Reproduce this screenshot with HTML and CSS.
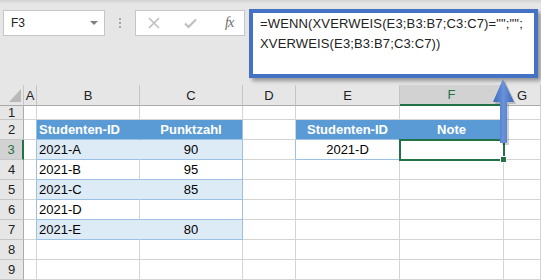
FILE: index.html
```html
<!DOCTYPE html>
<html lang="de">
<head>
    <meta charset="UTF-8">
    <title>XVERWEIS leer</title>
    <link rel="stylesheet" href="styles.css">
</head>
<body>
    <div class="toolbar">
        <div class="namebox"><span>F3</span><span class="caret"></span></div>
        <div class="grip"><i></i><i></i><i></i></div>
        <div class="fnbtns">
            <svg width="12" height="12" viewBox="0 0 12 12"><path d="M1 1 L11 11 M11 1 L1 11" stroke="#bfbfbf" stroke-width="1.6" fill="none"/></svg>
            <svg width="13" height="11" viewBox="0 0 13 11"><path d="M1 5.5 L4.5 9 L12 1.5" stroke="#bfbfbf" stroke-width="2.2" fill="none"/></svg>
            <span class="fx">fx</span>
        </div>
        <div class="formula">
            <div>=WENN(XVERWEIS(E3;B3:B7;C3:C7)="";"";</div>
            <div>XVERWEIS(E3;B3:B7;C3:C7))</div>
        </div>
    </div>

    <div class="sheet">
        <div class="hd corner"></div>
        <div class="hd">A</div>
        <div class="hd">B</div>
        <div class="hd">C</div>
        <div class="hd">D</div>
        <div class="hd">E</div>
        <div class="hd sel-col">F</div>
        <div class="hd">G</div>

        <div class="rh">1</div>
        <div class="c"></div><div class="c"></div><div class="c"></div><div class="c"></div><div class="c"></div><div class="c"></div><div class="c"></div>

        <div class="rh">2</div>
        <div class="c tl"></div>
        <div class="c th">Studenten-ID</div>
        <div class="c th mid tr">Punktzahl</div>
        <div class="c"></div>
        <div class="c th mid">Studenten-ID</div>
        <div class="c th mid">Note</div>
        <div class="c"></div>

        <div class="rh sel-row">3</div>
        <div class="c tl"></div>
        <div class="c band">2021-A</div>
        <div class="c band mid tr">90</div>
        <div class="c tl"></div>
        <div class="c mid key">2021-D</div>
        <div class="c active"><span class="handle"></span></div>
        <div class="c"></div>

        <div class="rh">4</div>
        <div class="c tl"></div>
        <div class="c plain">2021-B</div>
        <div class="c plain mid tr">95</div>
        <div class="c"></div><div class="c"></div><div class="c"></div><div class="c"></div>

        <div class="rh">5</div>
        <div class="c tl"></div>
        <div class="c band">2021-C</div>
        <div class="c band mid tr">85</div>
        <div class="c"></div><div class="c"></div><div class="c"></div><div class="c"></div>

        <div class="rh">6</div>
        <div class="c tl"></div>
        <div class="c plain">2021-D</div>
        <div class="c plain mid tr"></div>
        <div class="c"></div><div class="c"></div><div class="c"></div><div class="c"></div>

        <div class="rh">7</div>
        <div class="c tl"></div>
        <div class="c band">2021-E</div>
        <div class="c band mid tr">80</div>
        <div class="c"></div><div class="c"></div><div class="c"></div><div class="c"></div>

        <div class="rh">8</div>
        <div class="c"></div><div class="c"></div><div class="c"></div><div class="c"></div><div class="c"></div><div class="c"></div><div class="c"></div>

        <div class="rh">9</div>
        <div class="c"></div><div class="c"></div><div class="c"></div><div class="c"></div><div class="c"></div><div class="c"></div><div class="c"></div>
    </div>

    <!-- pointer from F3 up to the formula bar -->
    <svg class="arrow" width="30" height="72" viewBox="0 0 30 72">
        <defs>
            <linearGradient id="ag" x1="0" x2="1" y1="0" y2="0">
                <stop offset="0" stop-color="#3c68bb"/>
                <stop offset="0.5" stop-color="#6a92da"/>
                <stop offset="1" stop-color="#3c68bb"/>
            </linearGradient>
        </defs>
        <polygon points="15,5 26,28 19,28 19,69 12,69 12,28 5,28" fill="#000" opacity="0.18"/>
        <polygon points="13,3 24,26 17,26 17,67 10,67 10,26 3,26" fill="url(#ag)"/>
    </svg>
</body>
</html>
```

FILE: styles.css
```css
body { margin: 0; width: 541px; height: 280px; overflow: hidden; position: relative; font-family: "Liberation Sans", Arial, sans-serif; font-size: 13px; color: #000; background: #fff; }

.toolbar { height: 85px; box-sizing: border-box; display: flex; align-items: flex-start; padding: 10px 0 0 3px; background: linear-gradient(#d2d2d2 0, #e6e6e6 4px); }
.namebox { width: 102px; height: 26px; box-sizing: border-box; border: 1px solid #c6c6c6; background: #fff; display: flex; align-items: center; justify-content: space-between; padding: 0 6px 0 7px; font-size: 12px; color: #222; }
.caret { width: 0; height: 0; border-left: 4px solid transparent; border-right: 4px solid transparent; border-top: 4px solid #808080; }
.grip { margin: 8px 0 0 14px; width: 2px; display: flex; flex-direction: column; gap: 2px; }
.grip i { width: 2px; height: 2px; background: #a6a6a6; }
.fnbtns { margin-left: 14px; width: 110px; height: 26px; box-sizing: border-box; border: 1px solid #c6c6c6; background: #fff; display: flex; align-items: center; padding-left: 12px; gap: 24px; }
.fx { font-family: "Liberation Serif", serif; font-style: italic; font-size: 14px; color: #6b6b6b; margin-left: 4px; letter-spacing: -1px; }
.formula { margin: -1px 0 0 4px; width: 289px; height: 69px; box-sizing: border-box; border: 4px solid #4472c4; background: #fff; padding: 1px 0 0 7px; line-height: 20px; font-size: 13px; letter-spacing: 0.15px; color: #222; box-shadow: 3px 3px 4px rgba(0, 0, 0, 0.35); position: relative; z-index: 2; }

.sheet { display: grid; grid-template-columns: 24px 13px 103px 103px 53px 104px 104px 1fr; grid-template-rows: 21px 14px repeat(8, 20px); }
.sheet > div { box-sizing: border-box; border-right: 1px solid #d4d4d4; border-bottom: 1px solid #d4d4d4; display: flex; align-items: center; white-space: nowrap; }
.sheet .hd { background: #e6e6e6; justify-content: center; color: #222; border-right-color: #c6c6c6; border-bottom-color: #ababab; }
.sheet .rh { background: #e6e6e6; justify-content: center; color: #222; border-right-color: #ababab; border-bottom-color: #c6c6c6; }
.sheet .corner { position: relative; }
.corner::after { content: ""; position: absolute; right: 2px; bottom: 3px; width: 12px; height: 13px; background: #b9b9b9; clip-path: polygon(100% 0, 100% 100%, 0 100%); }
.sheet .sel-col { background: #d2d2d2; color: #217346; border-bottom: 2px solid #217346; }
.sheet .sel-row { background: #d2d2d2; color: #217346; border-right: 2px solid #217346; }

.c { padding-left: 2px; }
.sheet .mid { justify-content: center; padding-left: 0; }
.sheet .th { background: #5b9bd5; color: #fff; font-weight: bold; border-right-color: #5b9bd5; border-bottom-color: #9bc2e6; }
.sheet .band { background: #ddebf7; border-right-color: #ddebf7; border-bottom-color: #9bc2e6; }
.sheet .plain { border-bottom-color: #9bc2e6; }
.sheet .tl { border-right-color: #9bc2e6; }
.sheet .tr { border-right-color: #9bc2e6; }
.sheet .key { border-bottom-color: #9bc2e6; }
.sheet .active { position: relative; outline: 2px solid #217346; outline-offset: -1px; z-index: 1; }
.handle { position: absolute; right: -4px; bottom: -4px; width: 5px; height: 5px; background: #217346; border: 1px solid #fff; }

.arrow { position: absolute; left: 490px; top: 76px; z-index: 3; }
```
